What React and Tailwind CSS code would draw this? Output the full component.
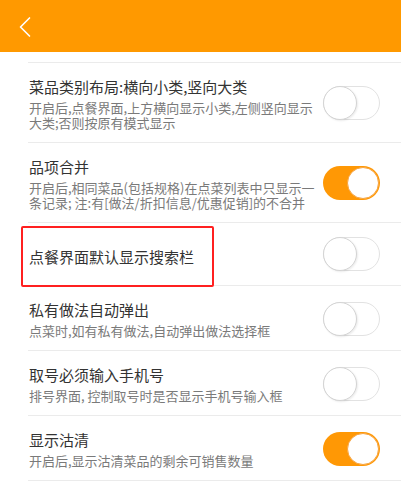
import { ChevronLeft } from 'lucide-react'

const settings = [
  {
    title: '菜品类别布局:横向小类,竖向大类',
    desc: ['开启后,点餐界面,上方横向显示小类,左侧竖向显示', '大类;否则按原有模式显示'],
    on: false,
  },
  {
    title: '品项合并',
    desc: ['开启后,相同菜品(包括规格)在点菜列表中只显示一', '条记录; 注:有[做法/折扣信息/优惠促销]的不合并'],
    on: true,
  },
  { title: '点餐界面默认显示搜索栏', desc: [], on: false, marked: true },
  { title: '私有做法自动弹出', desc: ['点菜时,如有私有做法,自动弹出做法选择框'], on: false },
  { title: '取号必须输入手机号', desc: ['排号界面, 控制取号时是否显示手机号输入框'], on: false },
  { title: '显示沽清', desc: ['开启后,显示沽清菜品的剩余可销售数量'], on: true },
]

function Toggle({ on }) {
  if (on) {
    return (
      <div className="w-[57px] h-[34px] rounded-full bg-[#ff9805] flex items-center justify-end pr-[1px] shrink-0">
        <div className="w-[32px] h-[32px] rounded-full bg-white border border-[#f7a440]" />
      </div>
    )
  }
  return (
    <div className="w-[57px] h-[34px] rounded-full bg-white border border-[#e2e2e2] flex items-center shrink-0">
      <div className="-ml-[1px] w-[34px] h-[34px] rounded-full bg-white border border-[#d4d4d4] shadow-[1px_1px_2px_rgba(0,0,0,0.08)]" />
    </div>
  )
}

function SettingRow({ item }) {
  const single = item.desc.length === 0
  return (
    <div
      className={`relative flex items-center justify-between border-b border-[#ebebeb] pr-[21px] ${
        single ? 'h-[63px]' : 'pt-[13px] pb-[12px]'
      }`}
    >
      <div className={`pl-[1px] ${single ? 'mt-[6px]' : ''}`}>
        <div className="text-[15px] leading-[22px] text-[#333333]">{item.title}</div>
        {item.desc.length > 0 && (
          <div className="mt-[2px] text-[13px] leading-[15px] text-[#7a7a7a]">
            {item.desc.map((line, i) => (
              <div key={i}>{line}</div>
            ))}
          </div>
        )}
      </div>
      <Toggle on={item.on} />
      {item.marked && (
        <div className="absolute left-[-7px] top-[3px] w-[193px] h-[61px] border-2 border-[#ff2020] rounded-[2px]" />
      )}
    </div>
  )
}

export default function App() {
  return (
    <div
      className="w-[401px] h-[485px] overflow-hidden bg-white"
      style={{ fontFamily: '"Noto Sans CJK SC", "Noto Sans", sans-serif' }}
    >
      <div className="h-[52px] bg-[#ff9900] flex items-center pl-[7px] pt-[2px]">
        <ChevronLeft size={36} strokeWidth={1.1} className="text-white" />
      </div>
      <div className="ml-[28px] mt-[10px] border-t border-[#ebebeb]">
        {settings.map((item, i) => (
          <SettingRow key={i} item={item} />
        ))}
      </div>
    </div>
  )
}
